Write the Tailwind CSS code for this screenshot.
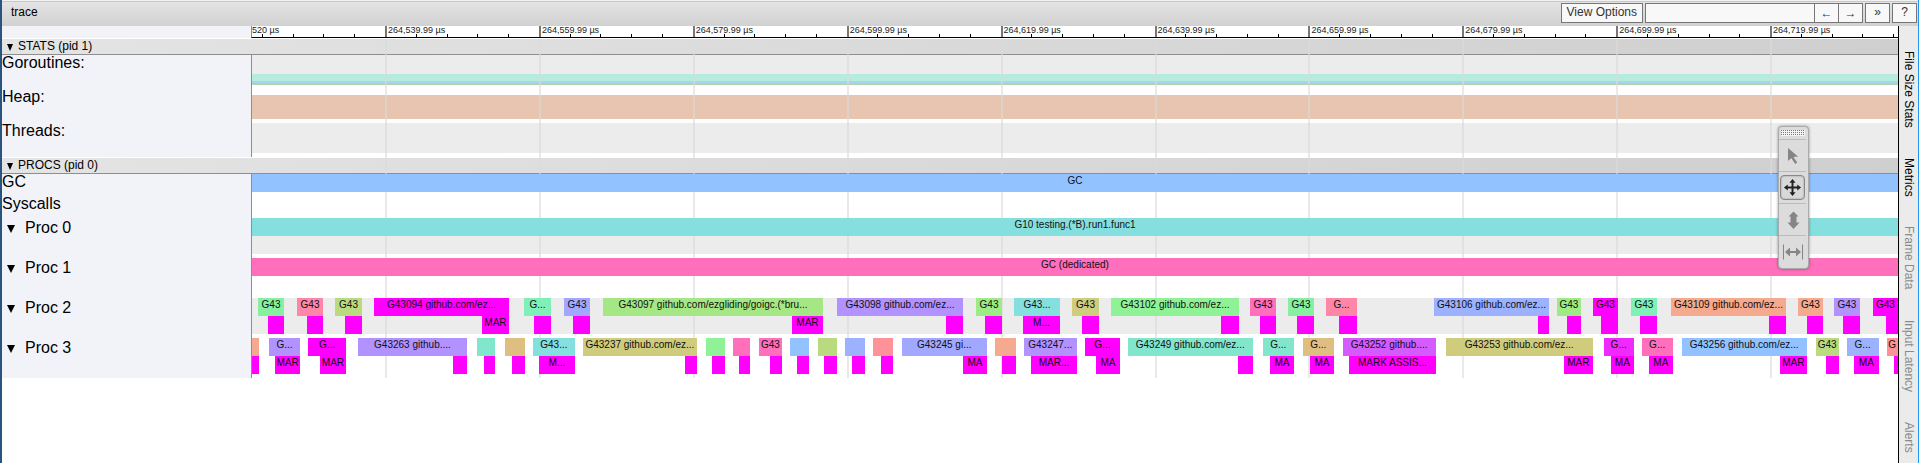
<!DOCTYPE html>
<html lang="en">
<head>
<meta charset="utf-8">
<title>trace</title>
<script src="https://cdn.jsdelivr.net/npm/@tailwindcss/browser@4"></script>
</head>
<body class="flex min-h-screen flex-col overflow-x-hidden border-l-2 border-r border-l-[#285580] border-r-[#2196f3] bg-white font-['Liberation_Sans',Arial,sans-serif] text-xs text-black">

<header class="flex h-[26px] shrink-0 items-center gap-0.5 border-t border-[#f2f2f2] bg-linear-to-b from-[#e5e5e5] to-[#d1d1d1] pr-px pb-px leading-4 shadow-[inset_0_1px_0_#c8c8c8]">
  <h1 class="flex-1 pb-0.5 pl-[9px]">trace</h1>
  <button class="h-5 border border-[#777] bg-[#f8f8f8] px-[5px] pb-0.5 text-[#333]">View Options</button>
  <div class="flex h-5 border border-[#777] bg-[#f8f8f8] text-[#333]">
    <input type="text" aria-label="Search" class="w-[168px] px-1 outline-none">
    <button aria-label="Previous match" class="w-6 border-l border-[#777]">←</button>
    <button aria-label="Next match" class="w-6 border-l border-[#777]">→</button>
  </div>
  <button aria-label="More" class="h-5 w-[25px] border border-[#777] bg-[#f8f8f8] pb-0.5 text-[#333]">»</button>
  <button aria-label="Help" class="h-5 w-[25px] border border-[#777] bg-[#f8f8f8] pb-0.5 text-[#333]">?</button>
</header>

<div class="flex flex-1">
  <main class="relative min-w-0 flex-1">
    <div class="flex h-3">
      <div class="w-[249px] shrink-0 bg-[#f2f3f8]"></div>
      <div id="ruler" class="relative flex-1 overflow-hidden border-b border-l border-b-black border-l-[#8e8e8e] text-[9px] leading-[9px] text-[#222]"></div>
    </div>

    <div class="relative">
      <div id="grid" class="pointer-events-none absolute inset-y-0 right-0 left-[250px] mt-px"></div>

      <section>
        <h2 class="flex h-[17px] items-center border-t border-b border-t-white border-b-[#8e8e8e] bg-linear-to-r from-[#e4e4e4] to-[#cfcfcf] leading-[14px]">
          <button class="flex items-center gap-[5px] pb-px pl-[5px]"><svg class="mt-0.5 h-[7px] w-[6px]" viewBox="0 0 6 7"><path d="M0 0h6L3 7z"/></svg>STATS (pid 1)</button>
        </h2>
        <div class="flex">
          <h3 class="w-[249px] shrink-0 bg-[#f2f3f8] text-base leading-4">Goroutines:</h3>
          <div class="flex-1 border-l border-[#8e8e8e] pb-1">
            <div class="h-[19px] bg-[#ececec]"></div>
            <div class="h-[7px] bg-[#b7ebde]"></div>
            <div class="h-0.5 bg-[#a0d9ec]"></div>
            <div class="h-0.5 bg-[#b9ceb3]"></div>
          </div>
        </div>
        <div class="flex">
          <h3 class="w-[249px] shrink-0 bg-[#f2f3f8] text-base leading-4">Heap:</h3>
          <div class="flex-1 border-l border-[#8e8e8e] pt-1.5 pb-1">
            <div class="h-6 bg-[#e8c5b0]"></div>
          </div>
        </div>
        <div class="flex">
          <h3 class="w-[249px] shrink-0 bg-[#f2f3f8] text-base leading-4">Threads:</h3>
          <div class="flex-1 border-l border-[#8e8e8e] pb-1">
            <div class="h-[30px] bg-[#ececec]"></div>
          </div>
        </div>
      </section>

      <section>
        <h2 class="flex h-[17px] items-center border-t border-b border-t-white border-b-[#8e8e8e] bg-linear-to-r from-[#e4e4e4] to-[#cfcfcf] leading-[14px]">
          <button class="flex items-center gap-[5px] pb-px pl-[5px]"><svg class="mt-0.5 h-[7px] w-[6px]" viewBox="0 0 6 7"><path d="M0 0h6L3 7z"/></svg>PROCS (pid 0)</button>
        </h2>
        <div id="procs"></div>
      </section>
    </div>

    <div role="toolbar" aria-label="Mouse mode" class="absolute top-[100px] right-[89px] z-30 flex w-[31px] flex-col items-stretch rounded-[4px] border border-[#aaa] bg-[#dcdcdc] pr-0.5 shadow-[0_0_3px_#0006]">
      <div class="flex h-[13px] items-center justify-center border-b border-[#bbb]">
        <svg class="h-[6px] w-6" viewBox="0 0 24 6"><defs><pattern id="dots" width="2" height="2" patternUnits="userSpaceOnUse"><rect width="2" height="2" fill="#f4f4f4"/><rect width="1" height="1" fill="#777"/></pattern></defs><rect width="24" height="6" fill="url(#dots)"/></svg>
      </div>
      <button aria-label="Selection" class="flex h-8 items-center justify-center border-b border-[#bbb]">
        <svg class="h-5 w-5" viewBox="0 0 20 20" fill="#858585"><path d="M5 2v13l3.200-3 4 6 2-1.400-3.800-5.600 4.600-.500z"/></svg>
      </button>
      <button aria-label="Pan" class="flex h-8 items-center justify-center border-b border-[#bbb]">
        <span class="flex h-[25px] w-[25px] items-center justify-center rounded-[4px] border border-[#888] bg-[#d9d9d9] shadow-[inset_0_0_2px_#0005]">
          <svg class="h-[19px] w-[19px] shrink-0" viewBox="0 0 20 20" fill="#222"><path d="M10 1l3.200 4H11v4h4V6.800L19 10l-4 3.200V11h-4v4h2.200L10 19l-3.200-4H9v-4H5v2.200L1 10l4-3.200V9h4V5H6.800z"/></svg>
        </span>
      </button>
      <button aria-label="Zoom" class="flex h-8 items-center justify-center border-b border-[#bbb]">
        <svg class="h-5 w-5" viewBox="0 0 20 20" fill="#858585"><path d="M10.500 1.500l5 5H13.500v6h3l-6 6.500-6-6.500h3v-6h-2z"/></svg>
      </button>
      <button aria-label="Timing" class="flex h-8 items-center justify-center">
        <svg class="h-5 w-5" viewBox="0 0 20 20" fill="#858585"><path d="M0 2.500h1v15H0zM19 2.500h1v15h-1zM2 10l5-4.500V9h6V5.500l5 4.500-5 4.500V11H7v3.500z"/></svg>
      </button>
    </div>
  </main>

  <nav aria-label="Side panels" class="flex w-5 shrink-0 flex-col items-center gap-[30px] border-l border-black bg-[#ebebeb] pt-[25px] leading-4">
    <button class="[writing-mode:vertical-rl]">File Size Stats</button>
    <button class="[writing-mode:vertical-rl]">Metrics</button>
    <button disabled class="text-[#8a8a8a] [writing-mode:vertical-rl]">Frame Data</button>
    <button disabled class="text-[#8a8a8a] [writing-mode:vertical-rl]">Input Latency</button>
    <button disabled class="text-[#8a8a8a] [writing-mode:vertical-rl]">Alerts</button>
  </nav>
</div>

<script>
// Visible range of the timeline, in ticks.
const START = 252, END = 1898, SPAN = END - START;
const pct = n => (n / SPAN * 100) + '%';
const M = '#ff00ff';

// Each slice is [start, end, colour, label].
const marks = list => list.map(([a, b, t]) => [a, b, M, t]);
const rows = [
  { name: 'GC', lanes: [[[252, 1898, '#92c2ff', 'GC']]] },
  { name: 'Syscalls', lanes: [[]] },
  { name: 'Proc 0', toggle: true, shaded: true, lanes: [[[252, 1898, '#85dfdf', 'G10 testing.(*B).run1.func1']], []] },
  { name: 'Proc 1', toggle: true, lanes: [[[252, 1898, '#ff6fbb', 'GC (dedicated)']], []] },
  { name: 'Proc 2', toggle: true, shaded: true, lanes: [
    [[258,284,'#86f0a0','G43'],[297,323,'#ff86a6','G43'],[335,362,'#bada80','G43'],[374,509,M,'G43094 github.com/ez...'],[524,551,'#80f0b8','G...'],[564,590,'#a2a8ff','G43'],[603,823,'#a5e785','G43097 github.com/ezgliding/goigc.(*bru...'],[837,963,'#b292ff','G43098 github.com/ez...'],[976,1002,'#9eea85','G43'],[1014,1060,'#85dfdf','G43...'],[1072,1099,'#d0cc7e','G43'],[1111,1239,'#90f296','G43102 github.com/ez...'],[1250,1276,'#ff6fbb','G43'],[1288,1314,'#86f0a0','G43'],[1326,1357,'#ff86a6','G...'],[1434,1549,'#9cb2ff','G43106 github.com/ez...'],[1557,1581,'#9eea85','G43'],[1593,1618,M,'G43'],[1631,1657,'#80f0b8','G43'],[1671,1786,'#f5a98e','G43109 github.com/ez...'],[1798,1823,'#f5a98e','G43'],[1834,1860,'#b292ff','G43'],[1873,1898,M,'G43']],
    marks([[268,284],[307,323],[345,362],[482,509,'MAR'],[534,551],[573,590],[792,823,'MAR'],[946,963],[985,1002],[1023,1060,'M...'],[1082,1099],[1221,1239],[1260,1276],[1297,1314],[1339,1357],[1538,1549],[1567,1581],[1601,1618],[1640,1657],[1769,1786],[1807,1823],[1843,1860],[1886,1898]])
  ] },
  { name: 'Proc 3', toggle: true, lanes: [
    [[252,259,'#f5a98e'],[269,300,'#b292ff','G...'],[308,346,M,'G...'],[358,467,'#b292ff','G43263 github....'],[477,495,'#82e6cc'],[505,525,'#dfbe82'],[533,575,'#85dfdf','G43...'],[583,697,'#d0cc7e','G43237 github.com/ez...'],[706,725,'#90f296'],[733,750,'#ff6fbb'],[759,782,'#ff6fbb','G43'],[790,809,'#92c2ff'],[818,837,'#bada80'],[845,865,'#9cb2ff'],[873,893,'#ff9298'],[902,987,'#a2a8ff','G43245 gi...'],[995,1016,'#f5a98e'],[1024,1077,'#b292ff','G43247...'],[1085,1120,M,'G...'],[1128,1253,'#82e6cc','G43249 github.com/ez...'],[1263,1294,'#82e6cc','G...'],[1303,1334,'#dfbe82','G...'],[1343,1436,'#d45cff','G43252 github....'],[1446,1593,'#d0cc7e','G43253 github.com/ez...'],[1604,1634,'#ee2aff','G...'],[1642,1673,'#ff6fbb','G...'],[1682,1807,'#92c2ff','G43256 github.com/ez...'],[1816,1839,'#bada80','G43'],[1847,1879,'#9cb2ff','G...'],[1887,1898,'#ff9298','G']],
    marks([[252,259],[275,300,'MAR'],[320,346,'MAR'],[453,467],[484,495],[512,525],[539,575,'M...'],[685,697],[712,725],[739,750],[770,782],[797,809],[824,837],[852,865],[881,893],[963,987,'MA'],[1002,1016],[1031,1077,'MAR...'],[1096,1120,'MA'],[1238,1253],[1270,1294,'MA'],[1310,1334,'MA'],[1349,1436,'MARK ASSIS...'],[1564,1593,'MAR'],[1611,1634,'MA'],[1649,1673,'MA'],[1780,1807,'MAR'],[1826,1839],[1854,1879,'MA'],[1894,1898]])
  ] }
];

// Slices follow one another in a lane; the margin is the idle time between them.
function lane(slices, shaded) {
  let at = START, out = '';
  for (const [a, b, color, label = ''] of slices) {
    out += `<div class="relative z-20 h-full shrink-0 overflow-hidden text-center whitespace-nowrap" style="margin-left:${pct(a - at)};width:${pct(b - a)};background:${color}">${label}</div>`;
    at = b;
  }
  return `<div class="flex h-[18px] overflow-hidden text-[10px] leading-[14px] text-[#111] ${shaded ? 'bg-[#ececec]' : ''}">${out}</div>`;
}

document.getElementById('procs').innerHTML = rows.map(r => {
  const name = r.toggle
    ? `<button class="flex items-center gap-2.5 pl-[5px] leading-5"><svg class="mt-0.5 h-2 w-2" viewBox="0 0 8 8"><path d="M0 0h8L4 8z"/></svg>${r.name}</button>`
    : r.name;
  return `<div class="flex"><h3 class="w-[249px] shrink-0 bg-[#f2f3f8] text-base leading-4">${name}</h3><div class="min-w-0 flex-1 border-l border-[#8e8e8e] pb-1">${r.lanes.map(l => lane(l, r.shaded)).join('')}</div></div>`;
}).join('');

// Ruler and grid: a major mark every 153.9 ticks, five minor steps to each.
const FIRST = 385, STEP = 153.9;
let ruler = '<span class="absolute top-0 left-0">520 µs</span>', grid = '';
for (let i = -4; FIRST + i * STEP / 5 < END; i++) {
  const x = pct(FIRST + i * STEP / 5 - START);
  if (i % 5) {
    ruler += `<div class="absolute bottom-0 h-[3px] w-px bg-black" style="left:${x}"></div>`;
  } else {
    const label = (264539.99 + i / 5 * 20).toLocaleString('en-US', { minimumFractionDigits: 2, maximumFractionDigits: 2 });
    ruler += `<div class="absolute inset-y-0 border-l-2 border-[#777] pl-px whitespace-nowrap" style="left:${x}">${label} µs</div>`;
    grid += `<div class="absolute inset-y-0 z-10 w-0.5 bg-[#dadada]/60" style="left:${x}"></div>`;
  }
}
document.getElementById('ruler').innerHTML = ruler;
document.getElementById('grid').innerHTML = grid;
</script>
</body>
</html>
